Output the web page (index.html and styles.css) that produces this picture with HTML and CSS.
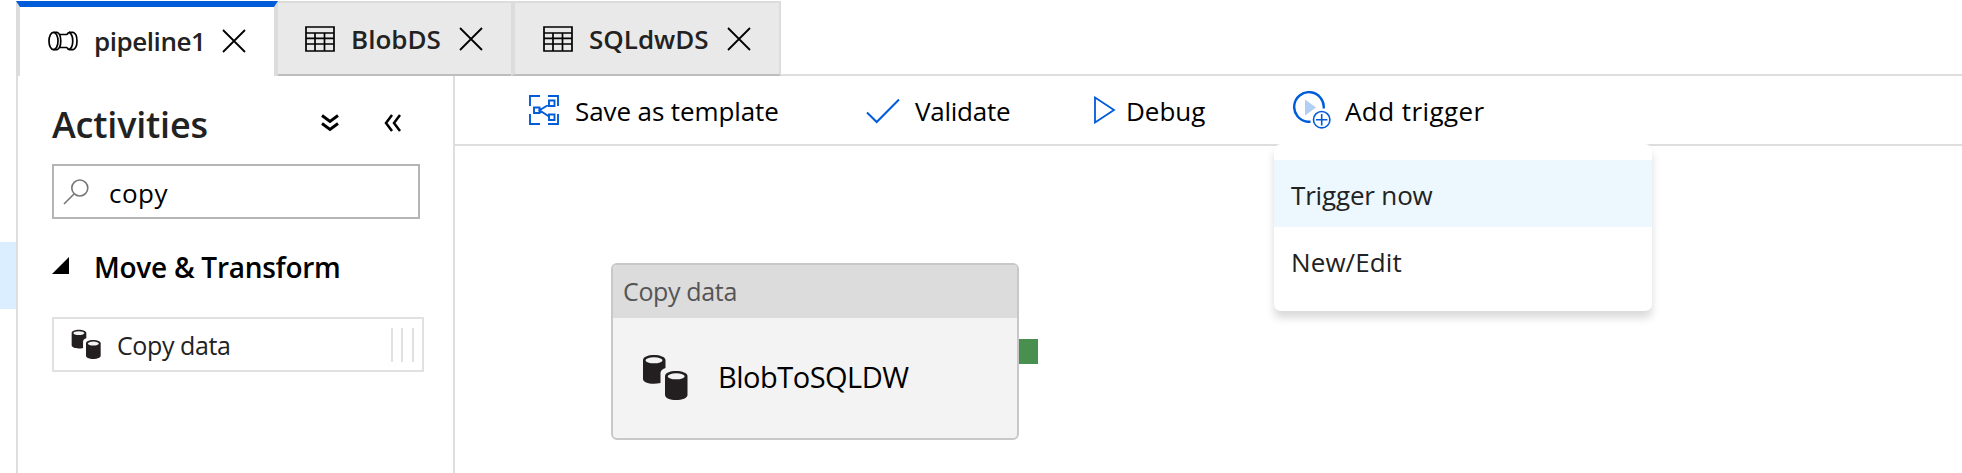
FILE: index.html
```html
<!DOCTYPE html>
<html lang="en">
<head>
<meta charset="utf-8">
<title>pipeline1</title>
<link rel="stylesheet" href="styles.css">
</head>
<body>
<svg width="0" height="0" class="defs">
  <symbol id="close" viewBox="0 0 24 24"><path d="M1 1L23 23M23 1L1 23" fill="none" stroke="#000" stroke-width="1.8"/></symbol>
  <symbol id="table" viewBox="0 0 30 26"><path d="M1 1H29V25H1ZM1 7H29M1 12.3H29M1 18H29M10 7V25M19.5 7V25" fill="none" stroke="#000" stroke-width="1.7"/></symbol>
  <symbol id="copy" viewBox="0 0 46 46">
    <path d="M1 6C1 3 6 1 12 1S23.500 3 23.500 6V14C20 15 18.500 17 18.500 19V29C10 31 1 29 1 25Z" fill="#231f20"/>
    <ellipse cx="12" cy="6.300" rx="8.500" ry="3" fill="#f3f3f3"/>
    <path d="M23 22C23 19 28 17 34 17S45.500 19 45.500 22V41C45.500 44 40 46 34 46S23 44 23 41Z" fill="#231f20"/>
    <ellipse cx="34.200" cy="22.300" rx="8.500" ry="3" fill="#f3f3f3"/>
  </symbol>
</svg>
<div class="app">
  <aside class="rail"><div class="rail-selected"></div></aside>
  <main class="main">
    <nav class="tabs">
      <div class="tab tab-active">
        <svg class="pipe-icon" viewBox="0 0 30 20"><g fill="none" stroke="#000" stroke-width="1.700"><ellipse cx="5.500" cy="10" rx="4.500" ry="8.700"/><path d="M5.500 1.300H9C14 3 14 17 9 18.700H5.500M12 3.500H19M12 16.500H19M19 3.500C19.500 2.500 20.500 1.300 21.500 1.300H25C30.300 3 30.300 17 25 18.700H21.500C20.500 18.700 19.500 17.500 19 16.500M21 1.300C26 4 26 16 21 18.700"/></g></svg>
        <span class="tab-label label-pipeline">pipeline1</span>
        <svg class="close"><use href="#close"/></svg>
      </div>
      <div class="tab tab-blob">
        <svg class="table-icon"><use href="#table"/></svg>
        <span class="tab-label label-blob">BlobDS</span>
        <svg class="close"><use href="#close"/></svg>
      </div>
      <div class="tab tab-sql">
        <svg class="table-icon"><use href="#table"/></svg>
        <span class="tab-label label-sql">SQLdwDS</span>
        <svg class="close"><use href="#close"/></svg>
      </div>
      <div class="tabs-rest"></div>
    </nav>
    <div class="workspace">
      <section class="activities">
        <header class="activities-head">
          <h1 class="title">Activities</h1>
          <svg class="chev-down" viewBox="0 0 18 18"><path d="M1 1.500L9 7.500L17 1.500M1 9.500L9 15.500L17 9.500" fill="none" stroke="#000" stroke-width="2.900"/></svg>
          <svg class="chev-left" viewBox="0 0 18 18"><path d="M8 1L2 9L8 17M16 1L10 9L16 17" fill="none" stroke="#000" stroke-width="2.500"/></svg>
        </header>
        <div class="search">
          <svg class="search-icon" viewBox="0 0 26 26"><g fill="none" stroke="#777" stroke-width="1.600"><circle cx="16.800" cy="9" r="8"/><path d="M11 15L1 25"/></g></svg>
          <span class="search-text">copy</span>
        </div>
        <div class="group">
          <svg class="caret" viewBox="0 0 17 17"><path d="M17 0V17H0Z"/></svg>
          <span class="group-label">Move &amp; Transform</span>
        </div>
        <div class="activity">
          <svg class="activity-icon"><use href="#copy"/></svg>
          <span class="activity-label">Copy data</span>
          <span class="grip"></span>
        </div>
      </section>
      <section class="editor">
        <div class="toolbar">
          <div class="tool">
            <svg class="template-icon" viewBox="0 0 30 30"><g fill="none" stroke="#015cda" stroke-width="1.900"><path d="M11 1H1V11M19 1H29V11M11 29H1V19M19 29H29V19"/><path d="M5 12.500H10.500V18H5ZM20 5.500H25.500V11H20ZM20 19.500H25.500V25H20ZM20 9.500L10.500 15.300L20 21.500"/></g></svg>
            <span class="tool-label label-save">Save as template</span>
          </div>
          <div class="tool">
            <svg class="check-icon" viewBox="0 0 34 26"><path d="M1 14.500L10.700 24L33 1.500" fill="none" stroke="#015cda" stroke-width="2"/></svg>
            <span class="tool-label label-validate">Validate</span>
          </div>
          <div class="tool">
            <svg class="play-icon" viewBox="0 0 22 28"><path d="M1 1.500L20 14L1 26.500Z" fill="none" stroke="#015cda" stroke-width="1.800"/></svg>
            <span class="tool-label label-debug">Debug</span>
          </div>
          <div class="tool">
            <svg class="trigger-icon" viewBox="0 0 38 38"><path d="M12 8.500V24.500L23 16.500Z" fill="#b3cef4"/><path d="M17.500 30.700H14.500A14.800 14.800 0 1 1 30.700 17.500" fill="none" stroke="#015cda" stroke-width="2.400"/><circle cx="28.700" cy="28.700" r="8.200" fill="none" stroke="#015cda" stroke-width="1.600"/><path d="M28.700 23V34.400M23 28.700H34.400" stroke="#015cda" stroke-width="1.600"/></svg>
            <span class="tool-label label-trigger">Add trigger</span>
          </div>
          <div class="menu">
            <div class="menu-item menu-item-hover"><span class="label-now">Trigger now</span></div>
            <div class="menu-item"><span class="label-new">New/Edit</span></div>
          </div>
        </div>
        <div class="canvas">
          <div class="node">
            <div class="node-head"><span class="label-node-type">Copy data</span></div>
            <div class="node-body">
              <svg class="node-icon"><use href="#copy"/></svg>
              <span class="node-name">BlobToSQLDW</span>
            </div>
            <i class="port"></i>
          </div>
        </div>
      </section>
    </div>
  </main>
</div>
</body>
</html>
```
FILE: styles.css
```css
* { box-sizing: border-box; }
body { margin: 0; background: #fff; color: #000; font: 26px/36px "Open Sans", "Noto Sans", sans-serif; overflow: hidden; }
svg { display: block; flex: none; }
span { white-space: nowrap; }
.defs { position: absolute; }
.app { display: flex; width: 1962px; height: 473px; }
.rail { width: 16px; padding-top: 242px; flex: none; }
.rail-selected { height: 67px; background: #dbeeff; }
.main { flex: 1; display: flex; flex-direction: column; padding-top: 1px; }

.tabs { display: flex; height: 75px; }
.tab { display: flex; align-items: center; flex: none; background: #e9e9e9; border-top: 2px solid #dcdcdc; border-bottom: 2px solid #bdbdbd; }
.tab-active { width: 262px; background: #fff; border: solid #dcdcdc; border-width: 6px 4px 0; border-top-color: #015cda; padding: 0 0 1px 28px; }
.tab-blob { width: 233px; padding-left: 27px; }
.tab-sql { width: 270px; padding-left: 28px; border-left: 4px solid #dcdcdc; border-right: 2px solid #dcdcdc; }
.tabs-rest { flex: 1; border-bottom: 2px solid #dedede; }
.tab-label { font-weight: 600; color: #222; }
.pipe-icon { width: 30px; height: 20px; }
.table-icon { width: 30px; height: 26px; }
.close { width: 24px; height: 24px; }
.label-pipeline { width: 128px; margin-left: 16px; letter-spacing: -.45px; }
.label-blob { width: 108px; margin-left: 16px; }
.label-sql { width: 138px; margin-left: 16px; }

.workspace { flex: 1; display: flex; min-height: 0; }
.activities { width: 439px; flex: none; border: solid #dedede; border-width: 0 2px; padding: 24px 29px 0 34px; }
.activities-head { display: flex; align-items: center; height: 46px; }
.title { margin: 0; padding-top: 3px; width: 269px; font-size: 36px; line-height: 48px; font-weight: 600; color: #222; letter-spacing: -.2px; }
.chev-down { width: 18px; height: 18px; }
.chev-left { width: 18px; height: 18px; margin-left: 45px; }
.search { display: flex; align-items: center; width: 368px; height: 55px; margin-top: 18px; border: 2px solid #b5b5b5; padding-left: 9px; }
.search-icon { width: 26px; height: 26px; }
.search-text { margin-left: 20px; padding-top: 2px; letter-spacing: .5px; }
.group { display: flex; align-items: center; height: 40px; margin-top: 28px; font-size: 28px; font-weight: 600; }
.caret { width: 17px; height: 17px; margin-top: -3px; }
.group-label { margin-left: 25px; letter-spacing: -.27px; }
.activity { display: flex; align-items: center; width: 372px; height: 55px; margin-top: 30px; border: 2px solid #e1e1e1; padding: 0 8px 0 17px; color: #222; }
.activity-icon { width: 30px; height: 30px; margin-top: -2px; }
.activity-label { margin-left: 16px; font-size: 25px; letter-spacing: -.4px; padding-top: 1px; }
.grip { width: 23px; height: 34px; margin-left: auto; border: solid #e1e1e1; border-width: 0 2px; background: linear-gradient(#e1e1e1, #e1e1e1) 8px 0 / 2px 100% no-repeat; }

.editor { flex: 1; display: flex; flex-direction: column; }
.toolbar { position: relative; display: grid; grid-template-columns: 337px 228px 199px 240px; height: 70px; border-bottom: 2px solid #dedede; padding-left: 74px; }
.tool { display: flex; align-items: center; padding-top: 2px; }
.template-icon { width: 30px; height: 30px; margin: -2px 16px 0 0; }
.check-icon { width: 34px; height: 26px; margin: -1px 15px 0 0; }
.play-icon { width: 22px; height: 28px; margin: -3px 10px 0 0; }
.trigger-icon { width: 38px; height: 38px; margin: -2px 14px 0 0; }
.label-save { letter-spacing: -.1px; }
.label-validate { letter-spacing: -.25px; }
.label-trigger { letter-spacing: .42px; }
.menu { position: absolute; left: 819px; top: 68px; width: 378px; height: 167px; padding-top: 16px; background: #fff; border-radius: 7px; box-shadow: 0 7px 9px rgba(0,0,0,.15); z-index: 2; color: #222; }
.menu-item { height: 67px; padding-left: 17px; line-height: 70px; }
.menu-item-hover { background: #ecf7fe; }
.label-now { letter-spacing: -.17px; }
.label-new { letter-spacing: .1px; }

.canvas { flex: 1; padding: 117px 0 0 156px; }
.node { position: relative; width: 408px; height: 177px; border: 2px solid #c8c8c8; border-radius: 6px; background: #f3f3f3; }
.node-head { height: 53px; padding-left: 10px; line-height: 53px; background: #dcdcdc; color: #555; border-radius: 4px 4px 0 0; }
.label-node-type { font-size: 25px; letter-spacing: -.35px; }
.node-body { display: flex; align-items: center; height: 118px; padding-left: 29px; }
.node-icon { width: 46px; height: 46px; }
.node-name { margin-left: 30px; font-size: 29px; letter-spacing: -.5px; }
.port { position: absolute; left: 406px; top: 74px; width: 19px; height: 25px; background: #488f50; }
```
